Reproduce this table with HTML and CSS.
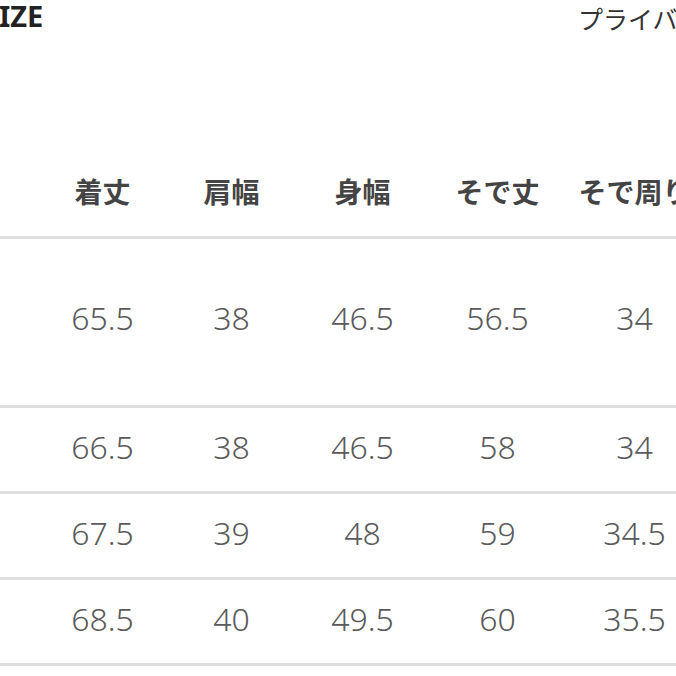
FILE: index.html
```html
<!DOCTYPE html>
<html lang="ja">
<head>
<meta charset="utf-8">
<title>SIZE</title>
<link rel="stylesheet" href="styles.css">
</head>
<body>
<div class="page">
  <header class="topbar">
    <h1 class="title">SIZE</h1>
    <a class="link">プライバシーポリシー</a>
  </header>
  <table class="size-table">
    <colgroup>
      <col class="c-lead">
      <col class="c-a">
      <col class="c-b">
      <col class="c-c">
      <col class="c-d">
      <col class="c-e">
    </colgroup>
    <thead>
      <tr class="head-row">
        <th></th><th>着丈</th><th>肩幅</th><th>身幅</th><th>そで丈</th><th>そで周り</th>
      </tr>
    </thead>
    <tbody>
      <tr class="row row-tall">
        <td></td><td>65.5</td><td>38</td><td>46.5</td><td>56.5</td><td>34</td>
      </tr>
      <tr class="row">
        <td></td><td>66.5</td><td>38</td><td>46.5</td><td>58</td><td>34</td>
      </tr>
      <tr class="row">
        <td></td><td>67.5</td><td>39</td><td>48</td><td>59</td><td>34.5</td>
      </tr>
      <tr class="row">
        <td></td><td>68.5</td><td>40</td><td>49.5</td><td>60</td><td>35.5</td>
      </tr>
    </tbody>
  </table>
</div>
</body>
</html>
```

FILE: styles.css
```css
html, body {
  margin: 0;
  padding: 0;
  background: #ffffff;
}

body {
  width: 676px;
  height: 676px;
  overflow: hidden;
}

.page {
  width: 676px;
  overflow: hidden;
}

.topbar {
  display: flex;
  justify-content: space-between;
  align-items: flex-start;
  height: 40px;
  white-space: nowrap;
}

.title {
  margin: 0 0 0 -17px;
  font-family: "Noto Sans", "Liberation Sans", sans-serif;
  font-weight: 700;
  font-size: 29px;
  line-height: 32px;
  color: #222222;
}

.link {
  flex: none;
  width: 98px;
  overflow: hidden;
  margin-top: 1px;
  font-family: "Noto Sans CJK JP", sans-serif;
  font-weight: 400;
  font-size: 25px;
  line-height: 34px;
  color: #333333;
}

.size-table {
  margin-top: 110px;
  border-collapse: collapse;
  table-layout: fixed;
  width: 703px;
}

.c-lead { width: 38px; }
.c-a { width: 129px; }
.c-b { width: 129px; }
.c-c { width: 133px; }
.c-d { width: 137px; }
.c-e { width: 137px; }

.head-row th {
  box-sizing: border-box;
  height: 87px;
  padding: 0 0 4px 0;
  text-align: center;
  vertical-align: middle;
  font-family: "Noto Sans CJK JP", sans-serif;
  font-weight: 700;
  font-size: 28px;
  line-height: 32px;
  color: #444444;
  white-space: nowrap;
  border-bottom: 3px solid #dedede;
}

.row td {
  box-sizing: border-box;
  height: 86px;
  padding: 0 0 4px 0;
  text-align: center;
  vertical-align: middle;
  font-family: "Noto Sans", "Open Sans", sans-serif;
  font-weight: 300;
  font-size: 32px;
  line-height: 36px;
  color: #5a5a5a;
  border-bottom: 3px solid #dedede;
}

.row-tall td {
  height: 169px;
  padding-bottom: 8px;
}
```
